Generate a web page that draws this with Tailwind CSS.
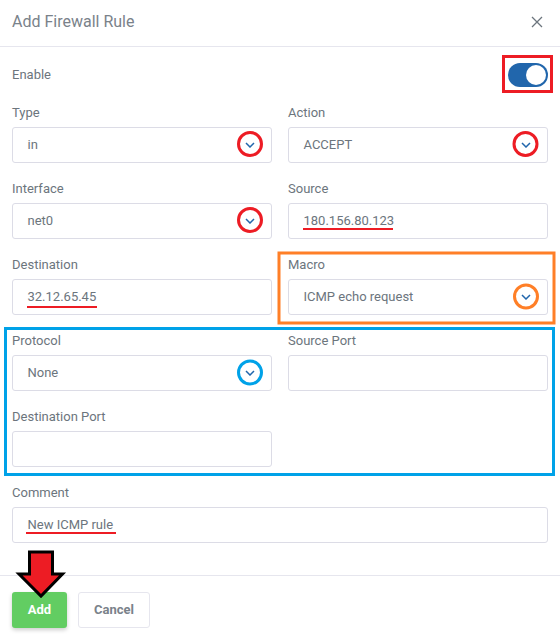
<!DOCTYPE html>
<html lang="en">

<head>
    <meta charset="UTF-8">
    <title>Add Firewall Rule</title>
    <script src="https://cdn.jsdelivr.net/npm/@tailwindcss/browser@4"></script>
</head>

<body class="bg-white">
    <div class="relative w-[560px] h-[643px] overflow-hidden bg-white text-[#6c757d] font-['Roboto',sans-serif] text-[13px]">
        <!-- header -->
        <header class="h-[47px] border-b border-[#e6e6ee] px-3 pb-[2px] flex items-center justify-between">
            <h1 class="text-[16px] text-[#7a828a]">Add Firewall Rule</h1>
            <svg class="w-3 h-3 mr-[5px] text-[#6c757d]" viewBox="0 0 12 12" fill="none" stroke="currentColor" stroke-width="1.3">
                <path d="M1 1l10 10M11 1L1 11" />
            </svg>
        </header>

        <!-- form -->
        <div class="px-3">
            <div class="h-[58px] pb-[2px] flex items-center justify-between">
                <span>Enable</span>
                <span class="w-10 h-6 rounded-full bg-[#2166ac] flex items-center justify-end pr-[2px]">
                    <span class="w-5 h-5 rounded-full bg-white"></span>
                </span>
            </div>

            <div class="grid grid-cols-2 gap-x-4 w-[536px]">
                <div class="h-[76px]">
                    <div class="h-[22px] leading-4">Type</div>
                    <div class="h-9 border border-[#dcdce6] rounded-[3px] pl-[14.5px] flex items-center justify-between pr-4">in
                        <svg class="w-[10px] h-[6px] text-[#2166ac]" viewBox="0 0 10 6" fill="none" stroke="currentColor" stroke-width="1.5"><path d="M1 1l4 4 4-4" /></svg>
                    </div>
                </div>
                <div class="h-[76px]">
                    <div class="h-[22px] leading-4">Action</div>
                    <div class="h-9 border border-[#dcdce6] rounded-[3px] pl-[14.5px] flex items-center justify-between pr-4">ACCEPT
                        <svg class="w-[10px] h-[6px] text-[#2166ac]" viewBox="0 0 10 6" fill="none" stroke="currentColor" stroke-width="1.5"><path d="M1 1l4 4 4-4" /></svg>
                    </div>
                </div>
                <div class="h-[76px]">
                    <div class="h-[22px] leading-4">Interface</div>
                    <div class="h-9 border border-[#dcdce6] rounded-[3px] pl-[14.5px] flex items-center justify-between pr-4">net0
                        <svg class="w-[10px] h-[6px] text-[#2166ac]" viewBox="0 0 10 6" fill="none" stroke="currentColor" stroke-width="1.5"><path d="M1 1l4 4 4-4" /></svg>
                    </div>
                </div>
                <div class="h-[76px]">
                    <div class="h-[22px] leading-4">Source</div>
                    <div class="h-9 border border-[#dcdce6] rounded-[3px] pl-[14.5px] flex items-center">180.156.80.123</div>
                </div>
                <div class="h-[76px]">
                    <div class="h-[22px] leading-4">Destination</div>
                    <div class="h-9 border border-[#dcdce6] rounded-[3px] pl-[14.5px] flex items-center">32.12.65.45</div>
                </div>
                <div class="h-[76px]">
                    <div class="h-[22px] leading-4">Macro</div>
                    <div class="h-9 border border-[#dcdce6] rounded-[3px] pl-[14.5px] flex items-center justify-between pr-4">ICMP echo request
                        <svg class="w-[10px] h-[6px] text-[#2166ac]" viewBox="0 0 10 6" fill="none" stroke="currentColor" stroke-width="1.5"><path d="M1 1l4 4 4-4" /></svg>
                    </div>
                </div>
                <div class="h-[76px]">
                    <div class="h-[22px] leading-4">Protocol</div>
                    <div class="h-9 border border-[#dcdce6] rounded-[3px] pl-[14.5px] flex items-center justify-between pr-4">None
                        <svg class="w-[10px] h-[6px] text-[#2166ac]" viewBox="0 0 10 6" fill="none" stroke="currentColor" stroke-width="1.5"><path d="M1 1l4 4 4-4" /></svg>
                    </div>
                </div>
                <div class="h-[76px]">
                    <div class="h-[22px] leading-4">Source Port</div>
                    <div class="h-9 border border-[#dcdce6] rounded-[3px]"></div>
                </div>
                <div class="h-[76px]">
                    <div class="h-[22px] leading-4">Destination Port</div>
                    <div class="h-9 border border-[#dcdce6] rounded-[3px]"></div>
                </div>
                <div class="h-[76px]"></div>
                <div class="h-[76px] col-span-2">
                    <div class="h-[22px] leading-4">Comment</div>
                    <div class="h-9 border border-[#dcdce6] rounded-[3px] pl-[14.5px] flex items-center">New ICMP rule</div>
                </div>
            </div>
        </div>

        <!-- footer -->
        <footer class="mt-[14px] border-t border-[#e6e6ee] px-3 pt-4 flex gap-[11px]">
            <button class="w-[55px] h-9 rounded-[3px] bg-[#62cd62] text-white font-bold text-[13px] shadow-[0_2px_4px_rgba(0,0,0,0.2)]">Add</button>
            <button class="w-[72px] h-9 rounded-[3px] border border-[#e6e6ee] bg-white text-[#7a828a] font-bold text-[13px]">Cancel</button>
        </footer>

        <!-- screenshot annotations -->
        <svg class="absolute left-0 top-0 w-[560px] h-[643px] pointer-events-none" viewBox="0 0 560 643" fill="none">
            <rect x="503.500" y="56.500" width="48" height="35" stroke="#ed1c24" stroke-width="3" />
            <circle cx="250" cy="144" r="11.500" stroke="#ed1c24" stroke-width="3" />
            <circle cx="525.500" cy="144" r="11.500" stroke="#ed1c24" stroke-width="3" />
            <circle cx="250" cy="220" r="11.500" stroke="#ed1c24" stroke-width="3" />
            <path d="M303 229h90M27 307h70M26 533h90" stroke="#ed1c24" stroke-width="2" />
            <rect x="279" y="253" width="275" height="70" stroke="#ff7f27" stroke-width="3" />
            <circle cx="526" cy="296.500" r="11.500" stroke="#ff7f27" stroke-width="3" />
            <rect x="5.500" y="328.500" width="548" height="146" stroke="#00a2e8" stroke-width="3" />
            <circle cx="250" cy="372.500" r="11.500" stroke="#00a2e8" stroke-width="3" />
            <path d="M29.500 552h23v22h10L41 596 19 574h10.500z" fill="#ed1c24" stroke="#000" stroke-width="3" />
        </svg>
    </div>
</body>

</html>
